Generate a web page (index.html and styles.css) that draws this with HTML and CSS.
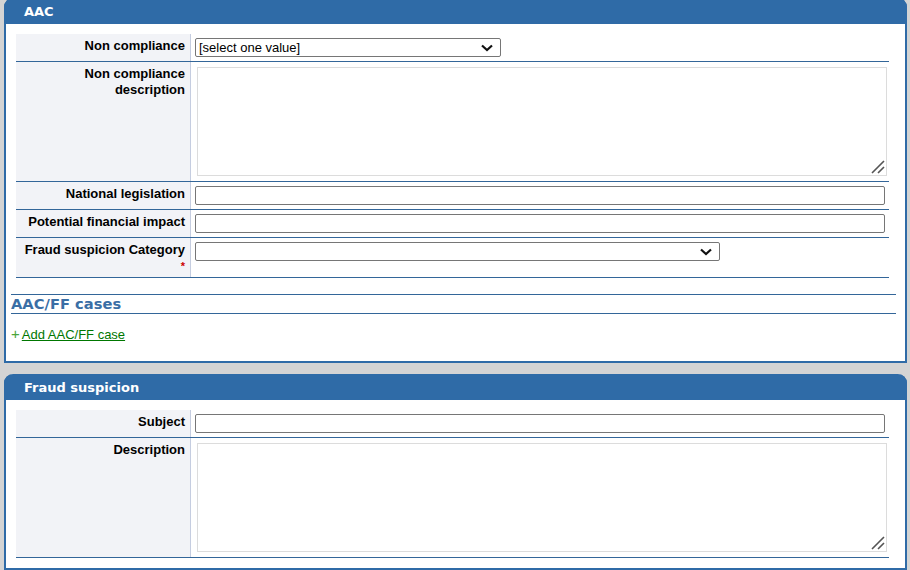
FILE: index.html
```html
<!DOCTYPE html>
<html lang="en">
<head>
    <meta charset="UTF-8">
    <title>AAC</title>
    <link rel="stylesheet" href="styles.css">
</head>
<body>
    <!-- AAC panel -->
    <div class="panel first">
        <div class="panel-header">AAC</div>
        <div class="panel-body">
            <table class="form">
                <tr>
                    <td class="label">Non compliance</td>
                    <td class="value">
                        <span class="select-wrap sel-short">
                            <select>
                                <option>[select one value]</option>
                            </select>
                            <svg class="chevron" width="12" height="8" viewBox="0 0 12 8"><path d="M1 1.5 L6 6 L11 1.5" fill="none" stroke="#111" stroke-width="2.2"/></svg>
                        </span>
                    </td>
                </tr>
                <tr>
                    <td class="label">Non compliance description</td>
                    <td class="value">
                        <span class="area-wrap">
                            <textarea></textarea>
                            <svg class="grip" width="14" height="14" viewBox="0 0 14 14"><path d="M1 13 L13 1 M7 13 L13 7" stroke="#555" stroke-width="1.6"/></svg>
                        </span>
                    </td>
                </tr>
                <tr>
                    <td class="label">National legislation</td>
                    <td class="value"><input type="text"></td>
                </tr>
                <tr>
                    <td class="label">Potential financial impact</td>
                    <td class="value"><input type="text"></td>
                </tr>
                <tr>
                    <td class="label label-req">Fraud suspicion Category<br><span class="req">*</span></td>
                    <td class="value">
                        <span class="select-wrap sel-long">
                            <select>
                                <option></option>
                            </select>
                            <svg class="chevron" width="12" height="8" viewBox="0 0 12 8"><path d="M1 1.5 L6 6 L11 1.5" fill="none" stroke="#111" stroke-width="2.2"/></svg>
                        </span>
                    </td>
                </tr>
            </table>

            <div class="section">
                <h3>AAC/FF cases</h3>
            </div>
            <div class="add-link"><span class="plus">+</span><a href="#">Add AAC/FF case</a></div>
        </div>
    </div>

    <!-- Fraud suspicion panel -->
    <div class="panel">
        <div class="panel-header">Fraud suspicion</div>
        <div class="panel-body">
            <table class="form">
                <tr>
                    <td class="label">Subject</td>
                    <td class="value"><input type="text"></td>
                </tr>
                <tr>
                    <td class="label">Description</td>
                    <td class="value">
                        <span class="area-wrap">
                            <textarea></textarea>
                            <svg class="grip" width="14" height="14" viewBox="0 0 14 14"><path d="M1 13 L13 1 M7 13 L13 7" stroke="#555" stroke-width="1.6"/></svg>
                        </span>
                    </td>
                </tr>
            </table>
        </div>
    </div>
</body>
</html>
```

FILE: styles.css
```css
body {
    margin: 0;
    padding: 0 3px 0 4px;
    background-color: #d4d4d4;
    font-family: 'Liberation Sans', Arial, sans-serif;
    font-size: 13px;
}

.panel {
    background-color: white;
    border: 2px solid #2f6ba7;
    border-top: none;
    border-radius: 9px 9px 0 0;
    margin-bottom: 11px;
}

.first {
    margin-top: -2px;
}

.panel-header {
    background-color: #2f6ba7;
    color: white;
    font-family: 'DejaVu Sans', Verdana, sans-serif;
    font-weight: bold;
    font-size: 13px;
    height: 26px;
    line-height: 27px;
    padding-left: 20px;
    margin: 0 -2px;
    border-radius: 9px 9px 0 0;
}

.panel-body {
    padding: 10px 16px 10px 10px;
}

.form {
    width: 100%;
    border-collapse: collapse;
    table-layout: fixed;
}

.form td {
    border-bottom: 1px solid #336699;
    vertical-align: top;
}

.label {
    width: 169px;
    background-color: #f2f3f7;
    border-right: 1px solid #c5cde0;
    text-align: right;
    font-weight: bold;
    color: #000;
    padding: 4px 5px 3px 0;
    line-height: 16px;
}

.label-req {
    padding-bottom: 3px;
}

.req {
    color: #cc0000;
    font-size: 11px;
}

.value {
    padding: 4px;
}

.value input {
    display: block;
    box-sizing: border-box;
    width: 690px;
    height: 19px;
    margin: 0;
    border: 1px solid #767676;
    border-radius: 2px;
    font-family: 'Liberation Sans', Arial, sans-serif;
    font-size: 13px;
}

.area-wrap {
    display: block;
    position: relative;
    width: 690px;
    margin: 1px 0 1px 2px;
}

.area-wrap textarea {
    display: block;
    box-sizing: border-box;
    width: 690px;
    height: 109px;
    margin: 0;
    border: 1px solid #dcdcdc;
    resize: none;
    font-family: 'Liberation Sans', Arial, sans-serif;
    font-size: 13px;
}

.grip {
    position: absolute;
    right: 2px;
    bottom: 2px;
    pointer-events: none;
}

.select-wrap {
    display: block;
    position: relative;
    height: 19px;
}

.select-wrap select {
    display: block;
    box-sizing: border-box;
    width: 100%;
    height: 19px;
    margin: 0;
    padding: 0 0 0 3px;
    appearance: none;
    font-family: 'Liberation Sans', Arial, sans-serif;
    font-size: 13px;
    border: 1px solid #767676;
    border-radius: 2px;
    background-color: white;
    color: #000;
}

.chevron {
    position: absolute;
    right: 8px;
    top: 6px;
    pointer-events: none;
}

.sel-short {
    width: 306px;
}

.sel-long {
    width: 525px;
}

.section {
    margin: 16px -7px 0 -5px;
}

.section h3 {
    margin: 0;
    border-top: 1px solid #336699;
    border-bottom: 1px solid #336699;
    font-family: 'DejaVu Sans', Verdana, sans-serif;
    font-size: 14.7px;
    font-weight: bold;
    color: #3a6ea5;
    line-height: 18px;
}

.add-link {
    margin: 12px 0 8px -5px;
    line-height: 16px;
}

.plus {
    color: #4aa63a;
    font-size: 15px;
    margin-right: 2px;
}

.add-link a {
    color: #007700;
    text-decoration: underline;
}
```
